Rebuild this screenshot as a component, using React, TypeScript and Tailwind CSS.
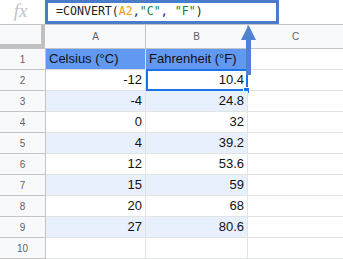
import React from "react";

const rows: { a: string; b: string }[] = [
  { a: "-12", b: "10.4" },
  { a: "-4", b: "24.8" },
  { a: "0", b: "32" },
  { a: "4", b: "39.2" },
  { a: "12", b: "53.6" },
  { a: "15", b: "59" },
  { a: "20", b: "68" },
  { a: "27", b: "80.6" },
  { a: "", b: "" },
];

export default function App() {
  return (
    <div
      className="relative w-[343px] h-[259px] overflow-hidden bg-white"
      style={{ fontFamily: '"Liberation Sans", Arial, sans-serif' }}
    >
      {/* formula bar */}
      <div className="flex h-[25px] border-b border-[#c4c4c4]">
        <div className="w-[45px] flex items-start justify-center pt-[1px]">
          <span
            className="italic text-[19px] leading-[20px] text-[#c4c4c4] pr-[4px]"
            style={{ fontFamily: '"Liberation Serif", serif' }}
          >
            fx
          </span>
        </div>
        <div className="w-[234px] h-[24px] border-[3px] border-[#4a7cc9] flex items-center pl-[8px]">
          <span
            className="text-[11.6px] leading-none text-[#222] whitespace-pre"
            style={{ fontFamily: '"DejaVu Sans Mono", monospace' }}
          >
            =CONVERT(<span className="text-[#f29b0b]">A2</span>,
            <span className="text-[#188038]">"C"</span>,{" "}
            <span className="text-[#188038]">"F"</span>)
          </span>
        </div>
      </div>

      {/* column headers */}
      <div className="flex h-[24px] bg-[#f8f9fa] border-b border-[#c4c4c4]">
        <div className="w-[45px] h-[23px] border-r-4 border-b-4 border-[#c0c0c0] bg-[#f8f9fa]" />
        <div className="w-[1px]" />
        <div className="w-[100px] border-r border-[#c4c4c4] flex items-center justify-center text-[10px] text-[#5f6368]">
          A
        </div>
        <div className="w-[102px] border-r border-[#c4c4c4] flex items-center justify-center text-[10px] text-[#5f6368]">
          B
        </div>
        <div className="flex-1 flex items-center justify-center text-[10px] text-[#5f6368]">
          C
        </div>
      </div>

      {/* row 1 */}
      <div className="flex h-[21px]">
        <div className="w-[46px] bg-[#f8f9fa] border-r border-b border-[#c4c4c4] flex items-center justify-center text-[10px] text-[#6b5e5e]">
          1
        </div>
        <div className="w-[100px] bg-[#6199f2] border-r border-b border-[#dadce0] flex items-center pl-[3px] text-[13px] text-[#111]">
          Celsius (°C)
        </div>
        <div className="w-[102px] bg-[#6199f2] border-r border-b border-[#dadce0] flex items-center pl-[3px] text-[13px] text-[#111]">
          Fahrenheit (°F)
        </div>
        <div className="flex-1 border-b border-[#e2e3e3]" />
      </div>

      {rows.map((r, i) => {
        const band = i % 2 === 1 && i < 8;
        const bg = band ? "bg-[#e8f0fe]" : "bg-white";
        return (
          <div key={i} className="flex h-[21px]">
            <div className="w-[46px] bg-[#f8f9fa] border-r border-b border-[#c4c4c4] flex items-center justify-center text-[10px] text-[#6b5e5e]">
              {i + 2}
            </div>
            <div
              className={`w-[100px] ${bg} border-r border-b border-[#e2e3e3] flex items-center justify-end pr-[3px] text-[13px] text-[#111]`}
            >
              {r.a}
            </div>
            <div
              className={`relative w-[102px] ${bg} border-r border-b border-[#e2e3e3] flex items-center justify-end pr-[3px] text-[13px] text-[#111]`}
            >
              {r.b}
              {i === 0 && (
                <>
                  <div className="absolute left-0 top-[-1px] w-[102px] h-[22px] border-2 border-[#1a73e8]" />
                  <div className="absolute right-[-3px] bottom-[-4px] w-[7px] h-[7px] bg-[#1a73e8] border border-white" />
                </>
              )}
            </div>
            <div className="flex-1 border-b border-[#e2e3e3]" />
          </div>
        );
      })}

      {/* annotation arrow */}
      <svg
        className="absolute left-0 top-0 pointer-events-none"
        width="343"
        height="259"
        viewBox="0 0 343 259"
      >
        <line x1="248.5" y1="75" x2="248.5" y2="38" stroke="#4f82d0" strokeWidth="5" />
        <polygon points="248.5,25 241,40 256,40" fill="#4f82d0" />
      </svg>
    </div>
  );
}
